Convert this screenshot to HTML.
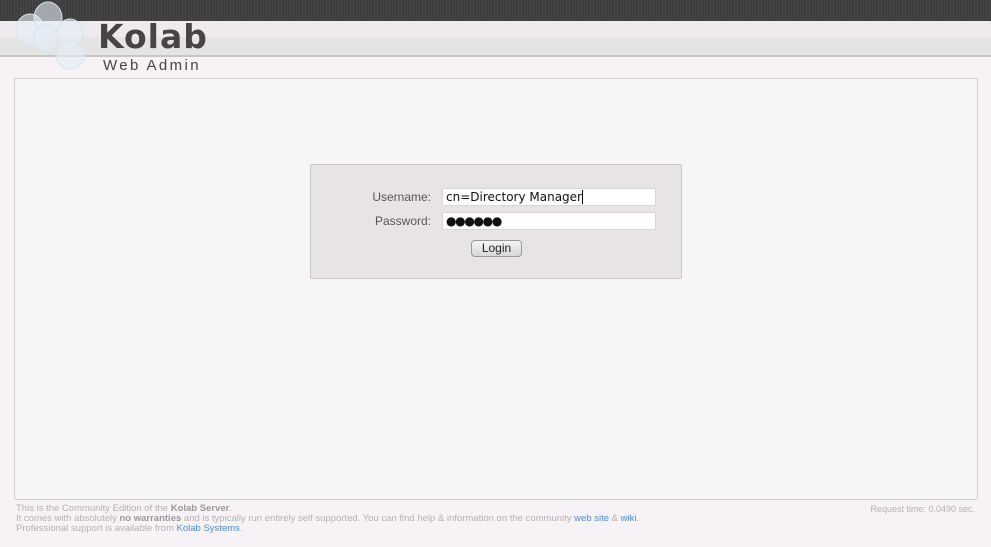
<!DOCTYPE html>
<html><head><style>
body{margin:0;width:991px;height:547px;background:#f6f2f5;font-family:"Liberation Sans",sans-serif;position:relative;overflow:hidden}
.top{position:absolute;left:0;top:0;width:991px;height:21px;background:repeating-linear-gradient(90deg,#3e3e3e 0 2px,#464646 2px 3px),#424242}
.b1{position:absolute;left:0;top:21px;width:991px;height:16px;background:#eeeaed}
.b2{position:absolute;left:0;top:37px;width:991px;height:18px;background:#e4e4e4;border-bottom:2px solid #c9c5c7}
.logo{position:absolute;left:98px;top:17px;font-family:"DejaVu Sans",sans-serif;font-size:33px;font-weight:bold;color:#4a4344;letter-spacing:1px}
.sub{position:absolute;left:103px;top:57px;font-size:15px;color:#4a4344;letter-spacing:2.4px}
.main{position:absolute;left:14px;top:78px;width:962px;height:420px;background:#f6f6f6;border:1px solid #d2d0d1;border-radius:2px}
.login{position:absolute;left:310px;top:164px;width:370px;height:113px;background:#e8e4e6;border:1px solid #cdc9cb;border-radius:2px;font-size:12px;color:#555}
.lbl{position:absolute;right:250px;width:100px;text-align:right}
.in{position:absolute;left:131px;background:#fff;border:1px solid #d8d8d8;border-radius:2px;font-family:"DejaVu Sans",sans-serif;font-size:12px;color:#111;line-height:16px;padding-left:3px;box-sizing:border-box;width:214px;height:18px}
.btn{position:absolute;left:160px;top:75px;width:49px;height:15px;border:1px solid #999;border-radius:4px;background:linear-gradient(#f4f4f4,#d8d8d8);font-size:12px;color:#222;text-align:center;line-height:15px}
.foot{position:absolute;left:16px;top:504px;font-size:9.5px;color:#b5b1b3;line-height:10px}
.foot b{color:#999;font-weight:bold}
.foot a{color:#4a90e2}
.rt{position:absolute;right:16px;top:504px;font-size:9px;color:#b5b1b3}
</style></head><body>
<div class="top"></div><div class="b1"></div><div class="b2"></div>
<svg style="position:absolute;left:8px;top:0" width="84" height="76">
<g fill="#e4eef8" fill-opacity="0.6" stroke="#d8e4ee" stroke-width="1">
<ellipse cx="22" cy="30" rx="14" ry="16"/><ellipse cx="40" cy="18" rx="14" ry="16"/><ellipse cx="62" cy="34" rx="13" ry="15"/><ellipse cx="62" cy="55" rx="14" ry="14"/><ellipse cx="38" cy="38" rx="12" ry="13"/></g></svg>
<div class="logo">Kolab</div>
<div class="sub">Web Admin</div>
<div class="main"></div>
<div class="login">
<div class="lbl" style="top:25px">Username:</div>
<div class="in" style="top:23px"><span style="border-right:1px solid #000">cn=Directory Manager</span></div>
<div class="lbl" style="top:49px">Password:</div>
<div class="in" style="top:47px;font-size:12px;letter-spacing:-1.3px">●●●●●●</div>
<div class="btn">Login</div>
</div>
<div class="foot">This is the Community Edition of the <b>Kolab Server</b>.<br>It comes with absolutely <b>no warranties</b> and is typically run entirely self supported. You can find help &amp; information on the community <a>web site</a> &amp; <a>wiki</a>.<br>Professional support is available from <a>Kolab Systems</a>.</div>
<div class="rt">Request time: 0.0490 sec.</div>
</body></html>
